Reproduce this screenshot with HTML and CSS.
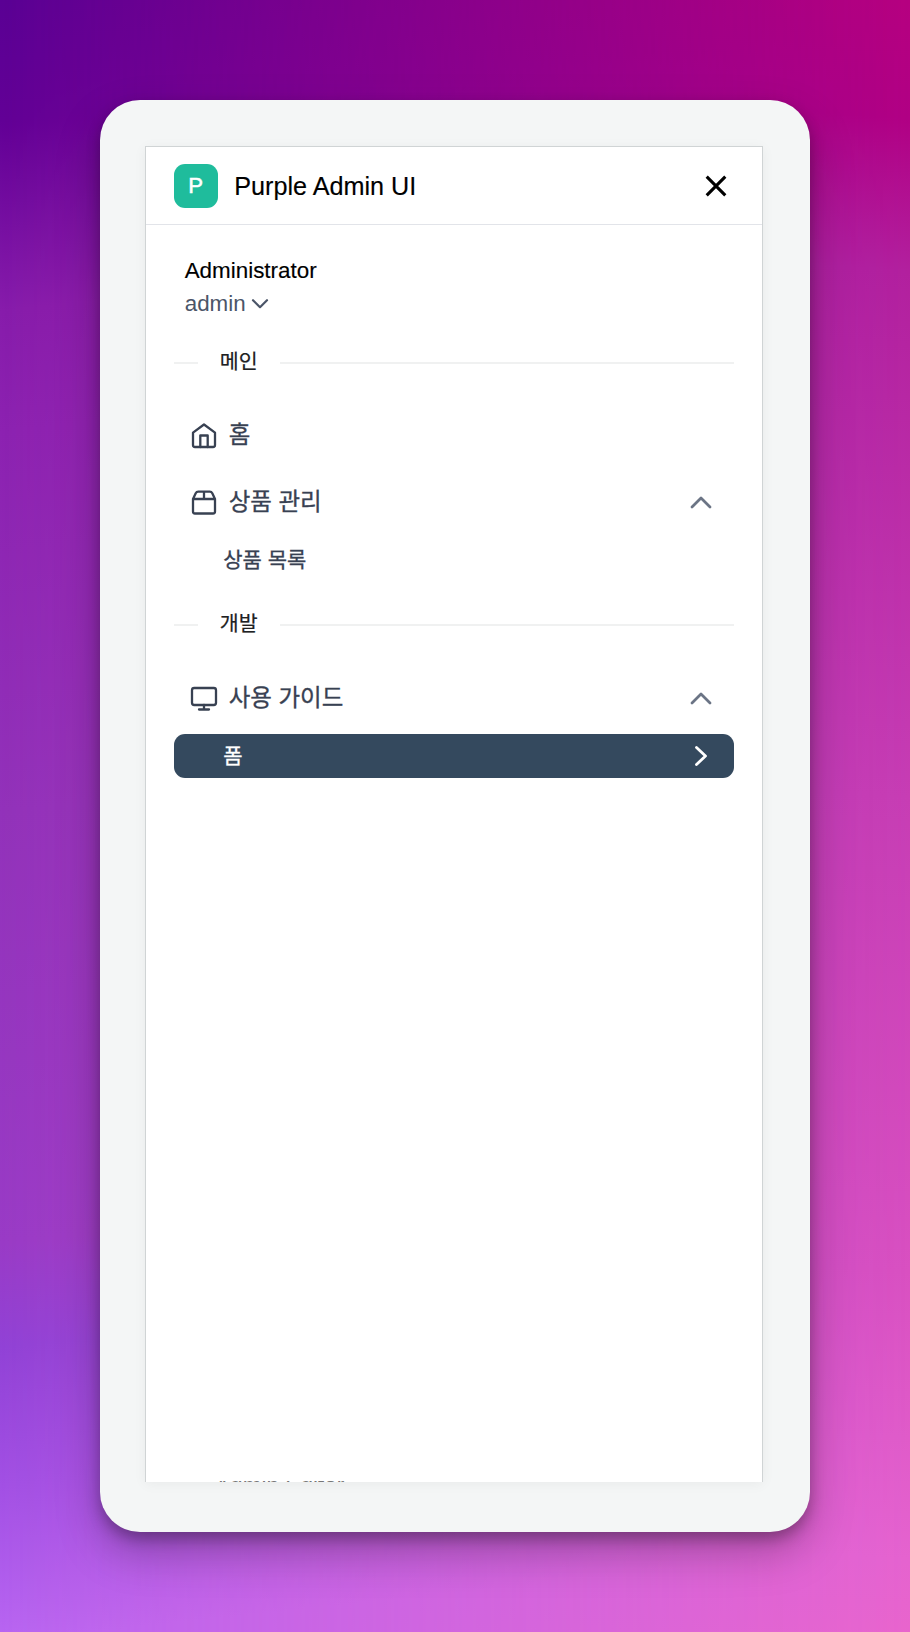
FILE: index.html
```html
<!DOCTYPE html>
<html lang="ko">
<head>
<meta charset="utf-8">
<title>Purple Admin UI</title>
<link rel="stylesheet" href="styles.css">
</head>
<body>
<div class="frame">
  <div class="panel">
    <header class="header">
      <div class="logo">P</div>
      <h1 class="title">Purple Admin UI</h1>
      <svg class="close" viewBox="0 0 20 20"><path d="M.7.7 19.3 19.3M19.3.7.7 19.3"/></svg>
    </header>
    <div class="content">
      <div class="user">
        <div class="user-name">Administrator</div>
        <div class="user-id">admin <svg class="caret" viewBox="0 0 16 10"><path d="M1 1.2 8 8.2 15 1.2"/></svg></div>
      </div>
      <div class="divider"><span>메인</span></div>
      <nav>
        <a class="item"><svg class="icon" viewBox="0 0 26 26"><path d="M2 10.6 13 2.5 24 10.6V23a2 2 0 0 1-2 2H4a2 2 0 0 1-2-2Z"/><path d="M9.3 25V13.5h7.4V25"/></svg><span>홈</span></a>
        <a class="item"><svg class="icon" viewBox="0 0 26 26"><path d="M2 10 4.7 4.2Q5.5 2.7 7.2 2.7H18.8Q20.5 2.7 21.3 4.2L24 10V22.5a2 2 0 0 1-2 2H4a2 2 0 0 1-2-2ZM2 10H24M13 2.7V10"/></svg><span>상품 관리</span><svg class="chevron" viewBox="0 0 20 12"><path d="M1 11 10 2 19 11"/></svg></a>
        <a class="subitem"><span>상품 목록</span></a>
      </nav>
      <div class="divider second"><span>개발</span></div>
      <nav>
        <a class="item"><svg class="icon" viewBox="0 0 26 26"><rect x="1" y="3" width="24" height="17" rx="2.2"/><path d="M13 20V24.5M8 24.5H18"/></svg><span>사용 가이드</span><svg class="chevron" viewBox="0 0 20 12"><path d="M1 11 10 2 19 11"/></svg></a>
        <a class="subitem active"><span>폼</span><svg class="arrow" viewBox="0 0 12 20"><path d="M1.5 1.5 10.5 10 1.5 18.5"/></svg></a>
      </nav>
    </div>
    <div class="peek">Admin Editor</div>
  </div>
</div>
</body>
</html>
```
FILE: styles.css
```css
* { box-sizing: border-box; }
body {
  margin: 0;
  height: 1632px;
  padding: 100px;
  overflow: hidden;
  position: relative;
  font-family: "Liberation Sans", "Noto Sans CJK KR", sans-serif;
  background: linear-gradient(174deg, #5a0094 0%, #620096 7%, #871cab 18%, #8c22b1 25%, #9232ba 47%, #993bc6 72%, #9142d6 78%, #a250e4 86%, #b966f2 95%);
}
body::before {
  content: "";
  position: absolute;
  inset: 0;
  background: linear-gradient(184deg, #b60080 0%, #b10084 7%, #b2209e 16%, #c73db4 47%, #d950c1 75%, #e563cf 92%, #eb66cb 100%);
  -webkit-mask-image: linear-gradient(90deg, transparent, #000);
  mask-image: linear-gradient(90deg, transparent, #000);
}
.frame {
  position: relative;
  width: 710px;
  height: 1432px;
  padding: 46px 47px 50px 45px;
  border-radius: 40px;
  background: #f4f6f6;
  box-shadow: 0 20px 44px rgba(0, 0, 0, .26), 0 7px 14px rgba(0, 0, 0, .26);
}
.panel {
  display: flex;
  flex-direction: column;
  height: 1336px;
  overflow: hidden;
  background: #fff;
  border: 1px solid #d0d4d5;
  border-bottom: 0;
  box-shadow: 0 2px 12px rgba(0, 0, 0, .05);
}
.header {
  display: flex;
  align-items: center;
  height: 78px;
  flex: none;
  padding: 0 36px 0 27.7px;
  border-bottom: 1px solid #e2e4e9;
}
.logo {
  width: 44px;
  height: 44px;
  border-radius: 11px;
  background: #1fbc9c;
  color: #fff;
  font-size: 22.2px;
  line-height: 44px;
  text-align: center;
  -webkit-text-stroke: .5px #fff;
}
.title {
  margin: 0 auto 0 16.6px;
  font-size: 25.2px;
  font-weight: 400;
  line-height: 32px;
  color: #000;
  -webkit-text-stroke: .15px #000;
}
svg { fill: none; stroke: currentColor; stroke-linecap: round; stroke-linejoin: round; flex: none; overflow: visible; }
.close { width: 20px; height: 20px; stroke-width: 3.1; stroke-linecap: butt; }
.content { padding: 29px 28px 0 27.7px; }
.user { padding-left: 11px; font-size: 22.4px; line-height: 33px; }
.user-name { color: #000; -webkit-text-stroke: .15px #000; }
.user-id { display: flex; align-items: center; gap: 6px; color: #4b5568; }
.caret { width: 16px; height: 10px; stroke-width: 2.2; }
.divider {
  display: flex;
  align-items: center;
  gap: 22px;
  height: 32px;
  margin-top: 27px;
  font-size: 20.6px;
  color: #202122;
}
.divider span { line-height: 28px; padding-bottom: 3px; -webkit-text-stroke: .2px; }
.divider::before, .divider::after { content: ""; height: 2px; background: #f0f1f1; width: 24px; }
.divider::after { flex: 1; }
.item {
  display: flex;
  align-items: center;
  height: 44px;
  padding: 0 23px 0 17px;
  font-size: 23.5px;
  color: #384152;
}
.item span, .subitem span { padding-bottom: 3px; -webkit-text-stroke: .3px; }
.divider + nav { padding-top: 33.5px; }
.divider.second { margin-top: 27.5px; }
.second + nav { padding-top: 34.5px; }
.item + .item { margin-top: 23px; }
.icon { width: 26px; height: 26px; margin-right: 12px; stroke-width: 2.3; }
.chevron { width: 20px; height: 12px; margin-left: auto; color: #6b7485; stroke-width: 2.8; }
.subitem {
  display: flex;
  align-items: center;
  height: 44px;
  margin-top: 14px;
  padding: 0 27px 0 49.5px;
  border-radius: 11px;
  font-size: 21px;
  color: #384152;
}
.active { background: #34495e; color: #fff; }
.arrow { width: 12px; height: 20px; margin-left: auto; stroke-width: 2.8; }
.peek {
  height: 1px;
  margin-top: auto;
  padding-left: 69px;
  flex: none;
  overflow: hidden;
  color: #777;
  font-size: 22.6px;
  line-height: 9px;
}
```
